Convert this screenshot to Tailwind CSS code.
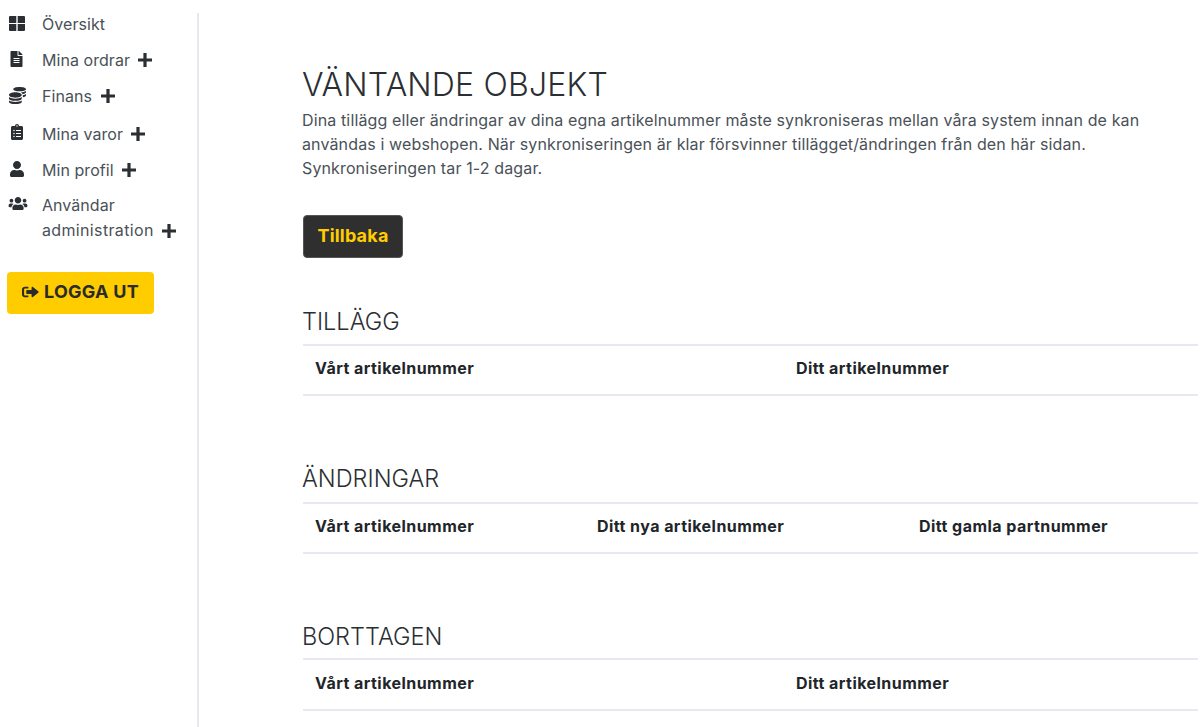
<!doctype html>
<html lang="sv"><head><meta charset="utf-8"><title>Väntande objekt</title>
<script src="https://cdn.jsdelivr.net/npm/@tailwindcss/browser@4"></script></head>
<body class="bg-white overflow-hidden font-['Inter',sans-serif]">
<div class="flex h-[727px] w-[1200px] overflow-hidden">
  <aside class="w-[199px] shrink-0 mt-[13px] border-r-2 border-[#e6eaf0] text-[16px] tracking-[0.05px] text-[#4a5157]">
    <nav class="flex flex-col pl-[9px]">
      <a class="flex h-[23px] pb-[2px] items-center"><span class="w-[33px] shrink-0"><svg class="w-[16px] h-[15px]" viewBox="0 0 16 15" fill="#2b2f33"><path d="M0 1a1 1 0 0 1 1-1h6.300v7H0zM8.700 0H15a1 1 0 0 1 1 1v6H8.700zM0 8h7.300v7H1a1 1 0 0 1-1-1zM8.700 8H16v6a1 1 0 0 1-1 1H8.700z"/></svg></span>Översikt</a>
      <a class="flex h-[23px] pb-[2px] items-center mt-[13px]"><span class="w-[33px] shrink-0"><svg class="w-[13px] h-[16px] -mt-[1px] ml-[1px]" viewBox="0 0 384 512" fill="#2b2f33"><path d="M224 136V0H24C10.700 0 0 10.700 0 24v464c0 13.300 10.700 24 24 24h336c13.300 0 24-10.700 24-24V160H248c-13.200 0-24-10.800-24-24zm64 236c0 6.600-5.400 12-12 12H108c-6.600 0-12-5.400-12-12v-8c0-6.600 5.400-12 12-12h168c6.600 0 12 5.400 12 12zm0-64c0 6.600-5.400 12-12 12H108c-6.600 0-12-5.400-12-12v-8c0-6.600 5.400-12 12-12h168c6.600 0 12 5.400 12 12zm0-72v8c0 6.600-5.400 12-12 12H108c-6.600 0-12-5.400-12-12v-8c0-6.600 5.400-12 12-12h168c6.600 0 12 5.400 12 12zm96-114.100v6.100H256V0h6.100c6.400 0 12.500 2.500 17 7l97.900 98c4.500 4.500 7 10.600 7 16.900z"/></svg></span>Mina ordrar<svg class="w-[14px] h-[14px] ml-[8px]" viewBox="0 0 14 14" fill="#2b2f33"><path d="M5.400 0h3.200v5.400H14v3.200H8.600V14H5.400V8.600H0V5.400h5.400z"/></svg></a>
      <a class="flex h-[23px] pb-[2px] items-center mt-[13px]"><span class="w-[33px] shrink-0"><svg class="w-[17px] h-[17px] -mt-[1px]" viewBox="0 0 512 512" fill="#2b2f33"><path d="M0 405.300V448c0 35.300 86 64 192 64s192-28.700 192-64v-42.700C342.700 434.400 267.200 448 192 448S41.300 434.400 0 405.300zM320 128c106 0 192-28.700 192-64S426 0 320 0 128 28.700 128 64s86 64 192 64zM0 300.400V352c0 35.300 86 64 192 64s192-28.700 192-64v-51.600c-41.300 34-116.900 51.600-192 51.600S41.300 334.400 0 300.400zm416 11c57.300-11.100 96-31.700 96-55.400v-42.700c-23.200 16.400-57.300 27.600-96 34.500v63.600zM192 160C86 160 0 195.800 0 240s86 80 192 80 192-35.800 192-80-86-80-192-80zm219.300 56.300c60-10.800 100.700-32 100.700-56.300v-42.700c-35.500 25.100-96.500 38.600-160.700 41.800 29.500 14.300 51.200 33.500 60 57.200z"/></svg></span>Finans<svg class="w-[14px] h-[14px] ml-[9px]" viewBox="0 0 14 14" fill="#2b2f33"><path d="M5.400 0h3.200v5.400H14v3.200H8.600V14H5.400V8.600H0V5.400h5.400z"/></svg></a>
      <a class="flex h-[23px] pb-[2px] items-center mt-[15px]"><span class="w-[33px] shrink-0"><svg class="w-[12px] h-[16px] ml-[2px] -mt-[3px]" viewBox="0 0 384 512" fill="#2b2f33"><path d="M336 64h-80c0-35.300-28.700-64-64-64s-64 28.700-64 64H48C21.500 64 0 85.500 0 112v352c0 26.500 21.500 48 48 48h288c26.500 0 48-21.500 48-48V112c0-26.500-21.500-48-48-48zM96 424c-13.300 0-24-10.700-24-24s10.700-24 24-24 24 10.700 24 24-10.700 24-24 24zm0-96c-13.300 0-24-10.700-24-24s10.700-24 24-24 24 10.700 24 24-10.700 24-24 24zm0-96c-13.300 0-24-10.700-24-24s10.700-24 24-24 24 10.700 24 24-10.700 24-24 24zm96-192c13.300 0 24 10.700 24 24s-10.700 24-24 24-24-10.700-24-24 10.700-24 24-24zm128 368c0 4.400-3.600 8-8 8H168c-4.400 0-8-3.600-8-8v-16c0-4.400 3.600-8 8-8h144c4.400 0 8 3.600 8 8zm0-96c0 4.400-3.600 8-8 8H168c-4.400 0-8-3.600-8-8v-16c0-4.400 3.600-8 8-8h144c4.400 0 8 3.600 8 8zm0-96c0 4.400-3.600 8-8 8H168c-4.400 0-8-3.600-8-8v-16c0-4.400 3.600-8 8-8h144c4.400 0 8 3.600 8 8z"/></svg></span>Mina varor<svg class="w-[14px] h-[14px] ml-[8px]" viewBox="0 0 14 14" fill="#2b2f33"><path d="M5.400 0h3.200v5.400H14v3.200H8.600V14H5.400V8.600H0V5.400h5.400z"/></svg></a>
      <a class="flex h-[23px] pb-[2px] items-center mt-[13px]"><span class="w-[33px] shrink-0"><svg class="w-[14px] h-[16px] ml-[1px] -mt-[1px]" viewBox="0 0 448 512" fill="#2b2f33"><path d="M224 256c70.700 0 128-57.300 128-128S294.700 0 224 0 96 57.300 96 128s57.300 128 128 128zm89.600 32h-16.700c-22.200 10.200-46.900 16-72.900 16s-50.600-5.800-72.900-16h-16.700C60.200 288 0 348.200 0 422.400V464c0 26.500 21.500 48 48 48h352c26.500 0 48-21.500 48-48v-41.600c0-74.200-60.200-134.400-134.400-134.400z"/></svg></span>Min profil<svg class="w-[14px] h-[14px] ml-[8px]" viewBox="0 0 14 14" fill="#2b2f33"><path d="M5.400 0h3.200v5.400H14v3.200H8.600V14H5.400V8.600H0V5.400h5.400z"/></svg></a>
      <a class="flex mt-[11px] leading-[25px]"><span class="w-[33px] shrink-0"><svg class="w-[20px] h-[15px] -ml-[1px] mt-[3px]" viewBox="0 0 640 512" fill="#2b2f33"><path d="M96 224c35.300 0 64-28.700 64-64s-28.700-64-64-64-64 28.700-64 64 28.700 64 64 64zm448 0c35.300 0 64-28.700 64-64s-28.700-64-64-64-64 28.700-64 64 28.700 64 64 64zm32 32h-64c-17.600 0-33.500 7.100-45.100 18.600 40.300 22.100 68.900 62 75.100 109.400h66c17.700 0 32-14.300 32-32v-32c0-35.300-28.700-64-64-64zm-256 0c61.900 0 112-50.100 112-112S381.900 32 320 32 208 82.100 208 144s50.100 112 112 112zm76.800 32h-8.300c-20.800 10-43.900 16-68.500 16s-47.600-6-68.500-16h-8.300C179.600 288 128 339.600 128 403.200V432c0 26.500 21.500 48 48 48h288c26.500 0 48-21.500 48-48v-28.800c0-63.600-51.600-115.200-115.200-115.200zm-223.700-13.400C161.500 263.100 145.600 256 128 256H64c-35.300 0-64 28.700-64 64v32c0 17.700 14.300 32 32 32h65.900c6.300-47.400 34.900-87.300 75.200-109.400z"/></svg></span><span>Användar<br><span class="inline-flex items-center tracking-[0.35px]">administration<svg class="w-[14px] h-[14px] ml-[8px]" viewBox="0 0 14 14" fill="#2b2f33"><path d="M5.400 0h3.200v5.400H14v3.200H8.600V14H5.400V8.600H0V5.400h5.400z"/></svg></span></span></a>
    </nav>
    <button class="ml-[7px] mt-[29px] flex h-[42px] w-[147px] items-center justify-center gap-[5px] pb-[3px] rounded-[4px] bg-[#ffcc00] text-[18px] tracking-[0.25px] font-bold text-[#2b2b2b]"><svg class="w-[17px] h-[14px]" viewBox="0 0 512 512" fill="#2b2b2b" preserveAspectRatio="none"><path d="M497 273L329 441c-15 15-41 4.500-41-17v-96H152c-13.300 0-24-10.700-24-24v-96c0-13.300 10.700-24 24-24h136V88c0-21.400 25.900-32 41-17l168 168c9.300 9.400 9.300 24.600 0 34zM192 436v-40c0-6.600-5.400-12-12-12H96c-17.700 0-32-14.300-32-32V160c0-17.700 14.300-32 32-32h84c6.600 0 12-5.400 12-12V76c0-6.600-5.400-12-12-12H96c-53 0-96 43-96 96v192c0 53 43 96 96 96h84c6.600 0 12-5.400 12-12z"/></svg>LOGGA UT</button>
  </aside>
  <main class="flex-1 pl-[104px] pr-[2px]">
    <h1 class="mt-[67px] -ml-[1px] text-[32px] tracking-[0.2px] leading-[36px] font-light text-[#2b2f33]">VÄNTANDE OBJEKT</h1>
    <p class="mt-[5px] -ml-[1px] w-[850px] text-[16px] tracking-[0.13px] leading-[24px] text-[#4a5157]">Dina tillägg eller ändringar av dina egna artikelnummer måste synkroniseras mellan våra system innan de kan användas i webshopen. När synkroniseringen är klar försvinner tillägget/ändringen från den här sidan. Synkroniseringen tar 1-2 dagar.</p>
    <button class="mt-[35px] block h-[43px] w-[100px] pb-[3px] rounded-[4px] border border-[#555] bg-[#2f2f2f] text-[18px] tracking-[0.2px] font-bold text-[#ffcc00]">Tillbaka</button>

    <h2 class="mt-[51px] -ml-[1px] text-[23.500px] leading-[26px] font-light text-[#2b2f33]">TILLÄGG</h2>
    <div class="mt-[9px] grid grid-cols-[481px_1fr] h-[52px] pb-[4px] items-center border-y-2 border-[#e6eaf0] px-[12px] text-[16px] tracking-[0.45px] font-bold text-[#212529]"><span>Vårt artikelnummer</span><span>Ditt artikelnummer</span></div>

    <h2 class="mt-[70px] -ml-[1px] text-[23.500px] leading-[26px] font-light text-[#2b2f33]">ÄNDRINGAR</h2>
    <div class="mt-[10px] grid grid-cols-[282px_322px_1fr] h-[52px] pb-[4px] items-center border-y-2 border-[#e6eaf0] px-[12px] text-[16px] tracking-[0.45px] font-bold text-[#212529]"><span>Vårt artikelnummer</span><span>Ditt nya artikelnummer</span><span>Ditt gamla partnummer</span></div>

    <h2 class="mt-[70px] -ml-[1px] text-[23.500px] leading-[26px] font-light text-[#2b2f33]">BORTTAGEN</h2>
    <div class="mt-[8px] grid grid-cols-[481px_1fr] h-[53px] pb-[4px] items-center border-y-2 border-[#e6eaf0] px-[12px] text-[16px] tracking-[0.45px] font-bold text-[#212529]"><span>Vårt artikelnummer</span><span>Ditt artikelnummer</span></div>
  </main>
</div>
</body></html>
